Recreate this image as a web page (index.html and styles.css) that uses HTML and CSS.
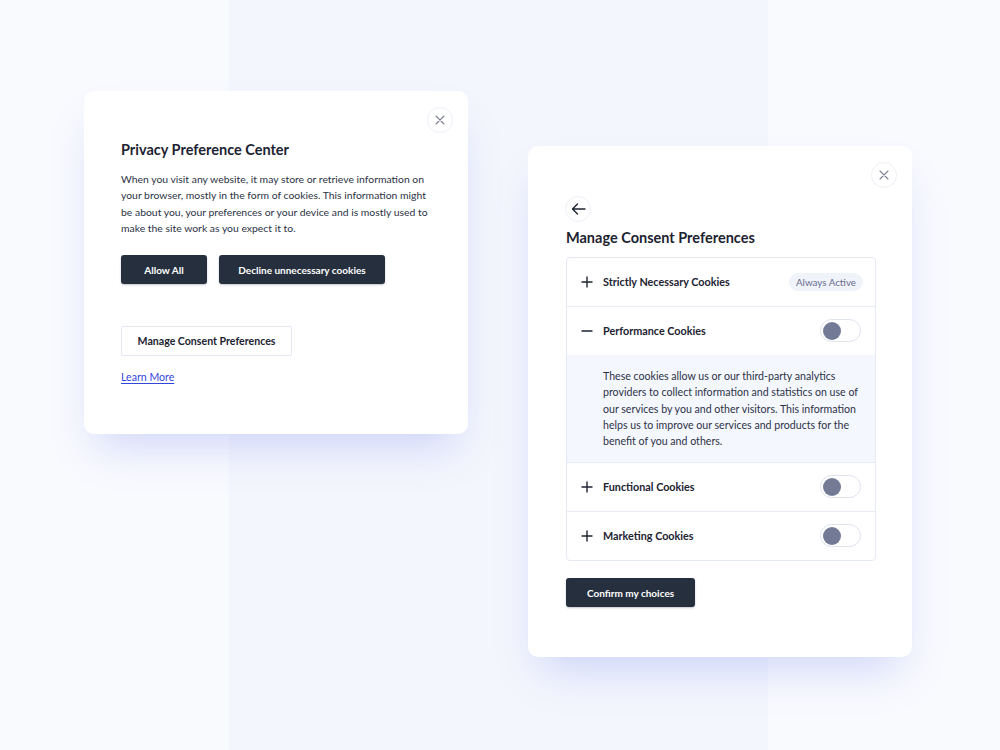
FILE: index.html
```html
<!DOCTYPE html>
<html lang="en">
<head>
<meta charset="utf-8">
<title>Cookie preferences</title>
<link rel="stylesheet" href="styles.css">
</head>
<body>
<main class="stage">
  <section class="card card-center">
    <button class="icon-btn close-btn" aria-label="Close">
      <svg width="10" height="10" viewBox="0 0 10 10"><path d="M1 1L9 9M9 1L1 9" stroke="#7d8294" stroke-width="1.1" fill="none" stroke-linecap="round"/></svg>
    </button>
    <h1 class="card-title">Privacy Preference Center</h1>
    <p class="card-text">When you visit any website, it may store or retrieve information on your browser, mostly in the form of cookies. This information might be about you, your preferences or your device and is mostly used to make the site work as you expect it to.</p>
    <div class="btn-row">
      <button class="btn btn-dark btn-allow">Allow All</button>
      <button class="btn btn-dark btn-decline">Decline unnecessary cookies</button>
    </div>
    <button class="btn btn-outline">Manage Consent Preferences</button>
    <a class="learn-more" href="#">Learn More</a>
  </section>

  <section class="card card-prefs">
    <button class="icon-btn close-btn" aria-label="Close">
      <svg width="10" height="10" viewBox="0 0 10 10"><path d="M1 1L9 9M9 1L1 9" stroke="#7d8294" stroke-width="1.1" fill="none" stroke-linecap="round"/></svg>
    </button>
    <button class="icon-btn back-btn" aria-label="Back">
      <svg width="15" height="12" viewBox="0 0 15 12"><path d="M14 6H1.5M6.5 1L1.5 6L6.5 11" stroke="#1d2331" stroke-width="1.4" fill="none" stroke-linecap="round" stroke-linejoin="round"/></svg>
    </button>
    <h2 class="card-title prefs-title">Manage Consent Preferences</h2>

    <div class="accordion">
      <div class="acc-row">
        <span class="acc-icon"><svg width="12" height="12" viewBox="0 0 12 12"><path d="M6 0.5V11.5M0.5 6H11.5" stroke="#1d2331" stroke-width="1.4"/></svg></span>
        <span class="acc-label">Strictly Necessary Cookies</span>
        <span class="badge">Always Active</span>
      </div>
      <div class="acc-row acc-open">
        <span class="acc-icon"><svg width="12" height="12" viewBox="0 0 12 12"><path d="M0.5 6H11.5" stroke="#1d2331" stroke-width="1.4"/></svg></span>
        <span class="acc-label">Performance Cookies</span>
        <span class="toggle"><span class="knob"></span></span>
      </div>
      <div class="acc-panel">
        <p>These cookies allow us or our third-party analytics providers to collect information and statistics on use of our services by you and other visitors. This information helps us to improve our services and products for the benefit of you and others.</p>
      </div>
      <div class="acc-row">
        <span class="acc-icon"><svg width="12" height="12" viewBox="0 0 12 12"><path d="M6 0.5V11.5M0.5 6H11.5" stroke="#1d2331" stroke-width="1.4"/></svg></span>
        <span class="acc-label">Functional Cookies</span>
        <span class="toggle"><span class="knob"></span></span>
      </div>
      <div class="acc-row acc-last">
        <span class="acc-icon"><svg width="12" height="12" viewBox="0 0 12 12"><path d="M6 0.5V11.5M0.5 6H11.5" stroke="#1d2331" stroke-width="1.4"/></svg></span>
        <span class="acc-label">Marketing Cookies</span>
        <span class="toggle"><span class="knob"></span></span>
      </div>
    </div>

    <button class="btn btn-dark btn-confirm">Confirm my choices</button>
  </section>
</main>
</body>
</html>
```

FILE: styles.css
```css
* {
  box-sizing: border-box;
}

html,
body {
  margin: 0;
  padding: 0;
}

body {
  width: 1000px;
  height: 750px;
  overflow: hidden;
  font-family: "Lato", "Noto Sans", sans-serif;
  color: #1d2331;
  background:
    linear-gradient(90deg,
      #f9fafe 0, #f9fafe 229px,
      #f4f6fd 229px, #f4f6fd 768px,
      #f9fafe 768px, #f9fafe 100%);
}

.stage {
  display: flex;
  align-items: flex-start;
  gap: 60px;
  padding-left: 84px;
}

.card {
  position: relative;
  width: 384px;
  background: #ffffff;
  border-radius: 10px;
  box-shadow: 0 24px 40px -12px rgba(104, 124, 232, 0.28);
}

.card-center {
  margin-top: 91px;
  padding: 49px 37px 50px;
}

.card-prefs {
  margin-top: 146px;
  padding: 50px 36px 50px 38px;
}

.icon-btn {
  display: flex;
  align-items: center;
  justify-content: center;
  width: 26px;
  height: 26px;
  padding: 0;
  border: 1px solid #eef0f7;
  border-radius: 50%;
  background: #ffffff;
  cursor: pointer;
}

.close-btn {
  position: absolute;
  top: 16px;
  right: 15px;
}

.card-title {
  margin: 0;
  font-size: 14.5px;
  line-height: 20px;
  font-weight: 700;
  color: #1d2331;
}

.card-text {
  margin: 11px 0 0;
  font-size: 10.4px;
  line-height: 16.3px;
  color: #2c3245;
}

.btn-row {
  display: flex;
  gap: 12px;
  margin-top: 19px;
}

.btn {
  font-family: inherit;
  cursor: pointer;
}

.btn-dark {
  height: 29px;
  border: 0;
  border-radius: 3px;
  background: #252f3e;
  color: #ffffff;
  font-size: 10px;
  font-weight: 700;
  box-shadow: 0 1px 2px rgba(20, 30, 50, 0.25);
}

.btn-allow {
  width: 86px;
}

.btn-decline {
  width: 166px;
}

.btn-outline {
  display: block;
  width: 171px;
  height: 30px;
  margin-top: 42px;
  border: 1px solid #e4e8f5;
  border-radius: 2px;
  background: #ffffff;
  color: #1d2331;
  font-size: 10.6px;
  font-weight: 700;
}

.learn-more {
  display: inline-block;
  margin-top: 14px;
  font-size: 10.6px;
  line-height: 14px;
  color: #3346dc;
  text-decoration: underline;
  text-underline-offset: 2px;
}

.back-btn {
  margin-left: -1px;
}

.prefs-title {
  margin-top: 6px;
}

.accordion {
  width: 310px;
  margin-top: 9px;
  border: 1px solid #e5e9f5;
  border-radius: 4px;
  overflow: hidden;
}

.acc-row {
  display: flex;
  align-items: center;
  height: 49px;
  padding: 0 14px 1px 14px;
  border-bottom: 1px solid #e9ecf6;
}

.acc-row.acc-open {
  height: 48px;
  border-bottom: 0;
}

.acc-row.acc-last {
  height: 48px;
  border-bottom: 0;
}

.acc-icon {
  display: flex;
  width: 12px;
  height: 12px;
  margin-right: 10px;
}

.acc-label {
  flex: 1;
  font-size: 10.8px;
  font-weight: 700;
  color: #1d2331;
}

.badge {
  margin-right: -2px;
  padding: 0 7px;
  height: 18px;
  line-height: 18px;
  border-radius: 9px;
  background: #f1f3fb;
  color: #666c8e;
  font-size: 9.8px;
}

.toggle {
  display: flex;
  align-items: center;
  width: 41px;
  height: 23px;
  margin-right: 0;
  padding: 0 2px;
  border: 1px solid #dfe3f0;
  border-radius: 12px;
  background: #ffffff;
}

.knob {
  width: 18px;
  height: 18px;
  border-radius: 50%;
  background: #737a96;
}

.acc-panel {
  padding: 13px 14px 13px 36px;
  background: #f5f7fe;
  border-bottom: 1px solid #e9ecf6;
}

.acc-panel p {
  margin: 0;
  font-size: 10.6px;
  line-height: 16.3px;
  color: #2c3245;
}

.btn-confirm {
  display: block;
  width: 129px;
  height: 29px;
  margin-top: 17px;
}
```
